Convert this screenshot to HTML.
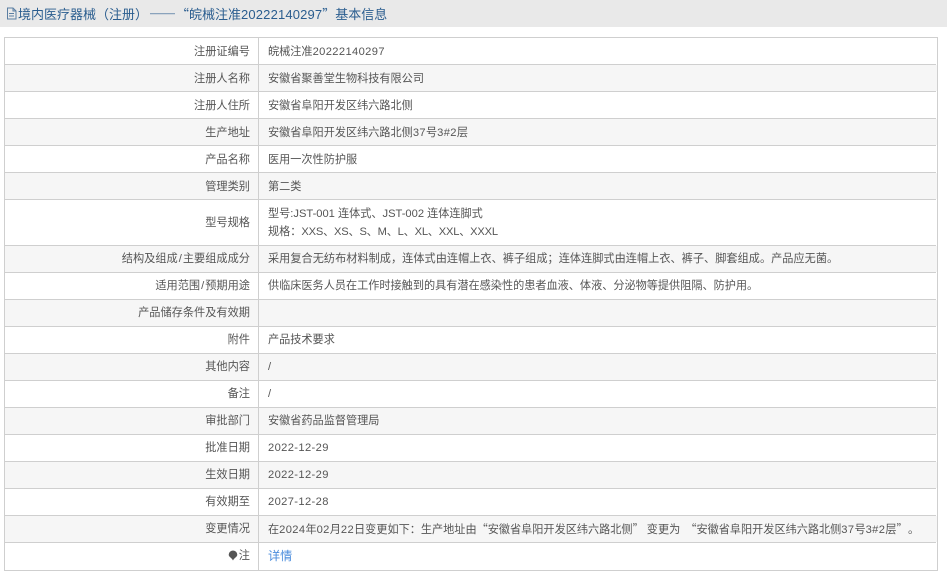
<!DOCTYPE html>
<html lang="zh-CN"><head><meta charset="utf-8"><title>基本信息</title>
<style>
html,body{margin:0;padding:0;width:947px;height:573px;overflow:hidden;background:#fff}
body{position:relative;font-family:"Liberation Sans","Noto Sans CJK SC",sans-serif;color:#555;font-size:11.15px}
.hd{position:absolute;left:0;top:0;width:947px;height:27px;background:#e9e9e9}
.ti{position:absolute;left:18px;top:4px;font-size:13px;line-height:18px;color:#2a5d8f;white-space:nowrap}
.ti .n{letter-spacing:.15px}
.ln{position:absolute;background:#cfcfcf}
.r{position:absolute;left:5px;width:932px}
.r.g{background:#f6f6f6}
.l,.v{position:absolute;white-space:nowrap;line-height:18px}
.l{right:687px;text-align:right;font-size:11.2px}
.v{left:263px}
.n{letter-spacing:.38px}
.x{letter-spacing:-.2px}
.c{font-family:"Noto Sans CJK SC",sans-serif}
.s{padding:0 1px}
a{color:#4a8cdc;text-decoration:none;font-size:12.2px}
</style></head><body>
<div class="hd"></div>
<svg style="position:absolute;left:6px;top:7px" width="11" height="13" viewBox="0 0 11 13"><path d="M1.500 1H7l3 3v8H1.500zM7 1v3h3M3 6.500h5M3 9h5" fill="none" stroke="#5b7fa3" stroke-width="1"/></svg>
<div class="ti">境内医疗器械（注册）<span class="c" style="margin:0 0 0 1px;font-size:13.5px;font-weight:700">——</span><span class="c">“</span>皖械注准<span class="n">20222140297</span><span class="c">”</span>基本信息</div>

<div class="r" style="top:38px;height:26px"><span class="l" style="top:5px">注册证编号</span><span class="v" style="top:5px">皖械注准<span class="n">20222140297</span></span></div>
<div class="r g" style="top:65px;height:26px"><span class="l" style="top:5px">注册人名称</span><span class="v" style="top:5px">安徽省聚善堂生物科技有限公司</span></div>
<div class="r" style="top:92px;height:26px"><span class="l" style="top:5px">注册人住所</span><span class="v" style="top:5px">安徽省阜阳开发区纬六路北侧</span></div>
<div class="r g" style="top:119px;height:26px"><span class="l" style="top:5px">生产地址</span><span class="v" style="top:5px">安徽省阜阳开发区纬六路北侧<span class="n">37</span>号<span class="n">3#2</span>层</span></div>
<div class="r" style="top:146px;height:26px"><span class="l" style="top:5px">产品名称</span><span class="v" style="top:5px">医用一次性防护服</span></div>
<div class="r g" style="top:173px;height:26px"><span class="l" style="top:5px">管理类别</span><span class="v" style="top:5px">第二类</span></div>
<div class="r" style="top:200px;height:45px"><span class="l" style="top:14px">型号规格</span><span class="v" style="top:5px">型号:JST-001 连体式、JST-002 连体连脚式</span><span class="v" style="top:23px">规格：<span class="x">XXS、XS、S、M、L、XL、XXL、XXXL</span></span></div>
<div class="r g" style="top:246px;height:26px"><span class="l" style="top:4px">结构及组成<span class="s">/</span>主要组成成分</span><span class="v" style="top:4px;letter-spacing:.04px">采用复合无纺布材料制成，连体式由连帽上衣、裤子组成；连体连脚式由连帽上衣、裤子、脚套组成。产品应无菌。</span></div>
<div class="r" style="top:273px;height:26px"><span class="l" style="top:4px">适用范围<span class="s">/</span>预期用途</span><span class="v" style="top:4px">供临床医务人员在工作时接触到的具有潜在感染性的患者血液、体液、分泌物等提供阻隔、防护用。</span></div>
<div class="r g" style="top:300px;height:26px"><span class="l" style="top:4px">产品储存条件及有效期</span></div>
<div class="r" style="top:327px;height:26px"><span class="l" style="top:4px">附件</span><span class="v" style="top:4px">产品技术要求</span></div>
<div class="r g" style="top:354px;height:26px"><span class="l" style="top:4px">其他内容</span><span class="v" style="top:4px">/</span></div>
<div class="r" style="top:381px;height:26px"><span class="l" style="top:4px">备注</span><span class="v" style="top:4px">/</span></div>
<div class="r g" style="top:408px;height:26px"><span class="l" style="top:4px">审批部门</span><span class="v" style="top:4px">安徽省药品监督管理局</span></div>
<div class="r" style="top:435px;height:26px"><span class="l" style="top:4px">批准日期</span><span class="v n" style="top:4px">2022-12-29</span></div>
<div class="r g" style="top:462px;height:26px"><span class="l" style="top:4px">生效日期</span><span class="v n" style="top:4px">2022-12-29</span></div>
<div class="r" style="top:489px;height:26px"><span class="l" style="top:4px">有效期至</span><span class="v n" style="top:4px">2027-12-28</span></div>
<div class="r g" style="top:516px;height:26px"><span class="l" style="top:4px">变更情况</span><span class="v" style="top:4px">在<span class="n">2024</span>年<span class="n">02</span>月<span class="n">22</span>日变更如下：生产地址由<span class="c">“</span>安徽省阜阳开发区纬六路北侧<span class="c">”</span> 变更为 <span class="c" style="margin-left:2px">“</span>安徽省阜阳开发区纬六路北侧<span class="n">37</span>号<span class="n">3#2</span>层<span class="c">”</span><span style="margin-left:6px">。</span></span></div>
<div class="r" style="top:543px;height:27px"><span class="l" style="top:4px">注</span><span class="v" style="top:4px"><a>详情</a></span></div>
<svg style="position:absolute;left:228px;top:550px" width="10" height="11" viewBox="0 0 10 11"><path d="M5 .5a4.300 4.300 0 0 1 4.300 4.300C9.300 7 6 8 5 10.500 4 8 .7 7 .7 4.800A4.300 4.300 0 0 1 5 .5z" fill="#555"/></svg>

<div class="ln" style="left:4px;top:37px;width:934px;height:1px"></div>
<div class="ln" style="left:4px;top:64px;width:932px;height:1px"></div>
<div class="ln" style="left:4px;top:91px;width:932px;height:1px"></div>
<div class="ln" style="left:4px;top:118px;width:932px;height:1px"></div>
<div class="ln" style="left:4px;top:145px;width:932px;height:1px"></div>
<div class="ln" style="left:4px;top:172px;width:932px;height:1px"></div>
<div class="ln" style="left:4px;top:199px;width:932px;height:1px"></div>
<div class="ln" style="left:4px;top:245px;width:932px;height:1px"></div>
<div class="ln" style="left:4px;top:272px;width:932px;height:1px"></div>
<div class="ln" style="left:4px;top:299px;width:932px;height:1px"></div>
<div class="ln" style="left:4px;top:326px;width:932px;height:1px"></div>
<div class="ln" style="left:4px;top:353px;width:932px;height:1px"></div>
<div class="ln" style="left:4px;top:380px;width:932px;height:1px"></div>
<div class="ln" style="left:4px;top:407px;width:932px;height:1px"></div>
<div class="ln" style="left:4px;top:434px;width:932px;height:1px"></div>
<div class="ln" style="left:4px;top:461px;width:932px;height:1px"></div>
<div class="ln" style="left:4px;top:488px;width:932px;height:1px"></div>
<div class="ln" style="left:4px;top:515px;width:932px;height:1px"></div>
<div class="ln" style="left:4px;top:542px;width:932px;height:1px"></div>
<div class="ln" style="left:4px;top:570px;width:934px;height:1px"></div>
<div class="ln" style="left:4px;top:37px;width:1px;height:534px"></div>
<div class="ln" style="left:258px;top:37px;width:1px;height:534px"></div>
<div class="ln" style="left:937px;top:37px;width:1px;height:534px"></div>
</body></html>
